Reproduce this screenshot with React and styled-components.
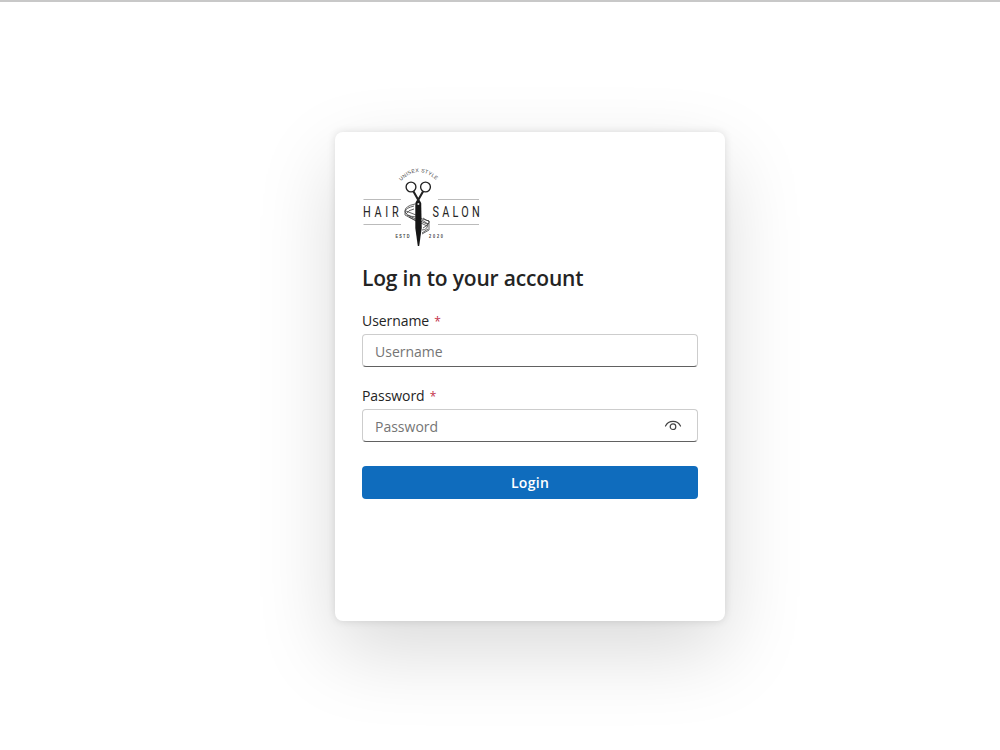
import React from "react";
import styled, { createGlobalStyle } from "styled-components";

const GlobalStyle = createGlobalStyle`
  * { box-sizing: border-box; }
  body {
    margin: 0;
    background: #fff;
    color: #242424;
    font-family: "Open Sans", "Noto Sans", sans-serif;
  }
`;

const Page = styled.main`
  height: 750px;
  display: flex;
  justify-content: center;
  align-items: flex-start;
  padding: 130px 0 0 60px;
  border-top: 2px solid #c8c8c8;
  overflow: hidden;
`;

const Card = styled.section`
  width: 390px;
  height: 489px;
  padding: 32px 27px 0;
  border-radius: 8px;
  background: #fff;
  box-shadow: 0 0 9px rgba(0, 0, 0, 0.12), 0 30px 80px rgba(0, 0, 0, 0.15);
`;

const Logo = styled.svg`
  display: block;
  width: 120px;
  height: 88px;
`;

const Title = styled.h1`
  margin: 11px 0 0;
  height: 31px;
  font-size: 21px;
  line-height: 30px;
  font-weight: 600;
  letter-spacing: -0.18px;
  white-space: nowrap;
`;

const Form = styled.form`
  display: flex;
  flex-direction: column;
  padding-top: 17px;
`;

const Field = styled.div`
  display: flex;
  flex-direction: column;
  height: 75px;
`;

const Label = styled.label`
  height: 23px;
  font-size: 14px;
  line-height: 20px;
  letter-spacing: -0.06px;
`;

const Required = styled.span`
  margin-left: 5px;
  font-size: 12px;
  color: #c4314b;
`;

const InputBox = styled.div`
  display: flex;
  align-items: center;
  height: 33px;
  padding: 0 15px 0 12px;
  border: 1px solid #cdcdcd;
  border-bottom-color: #616161;
  border-radius: 4px;
`;

const Input = styled.input`
  flex: 1;
  min-width: 0;
  height: 29px;
  padding: 1px 0 0;
  border: 0;
  outline: 0;
  background: transparent;
  font: 14px "Open Sans", "Noto Sans", sans-serif;
  &::placeholder { color: #757575; opacity: 1; }
`;

const Eye = styled.svg`
  width: 18px;
  height: 18px;
`;

const LoginButton = styled.button`
  height: 33px;
  margin-top: 5px;
  padding: 0;
  border: 0;
  border-radius: 4px;
  background: #0f6cbd;
  color: #fff;
  font: 600 14px/33px "Open Sans", "Noto Sans", sans-serif;
  letter-spacing: 0.3px;
`;

function SalonLogo() {
  return (
    <Logo viewBox="0 0 120 88" role="img" aria-label="Hair Salon">
      <defs>
        <path id="arc" d="M39 17 Q56.500 -1 75 17" />
      </defs>
      <text fontFamily="Liberation Sans, sans-serif" fontSize="5" fill="#333">
        <textPath href="#arc" textLength="40">UNISEX STYLE</textPath>
      </text>
      <g stroke="#aaa" strokeWidth="0.8">
        <path d="M1.500 35.500H39M76 35.500H117M1.500 60.500H39M76 60.500H117" />
      </g>
      <g fontFamily="Roboto, sans-serif" fontSize="15.500" fill="#252525">
        <text transform="translate(1 53) scale(0.7 1)" textLength="51">HAIR</text>
        <text transform="translate(70.500 53) scale(0.7 1)" textLength="67.500">SALON</text>
      </g>
      <g fontFamily="Liberation Sans, sans-serif" fontWeight="700" fontSize="5.500" fill="#444">
        <text transform="translate(33.500 74.200) scale(0.7 1)" textLength="20">ESTD</text>
        <text transform="translate(67 74.200) scale(0.7 1)" textLength="20">2020</text>
      </g>
      <g fill="none" stroke="#333" strokeWidth="0.75">
        <path d="M53 40Q43 42 43 47Q43 52 54 53L67 57Q68 60 61 64" />
        <path d="M52 42Q44 44 43 47M52 45Q46 46 44 50M45 51L65 60M44 47L54 51M47 53L65 62M61 54Q65 57 67 57M60 66Q66 66 66 59M60 69L66 65M60 56L66 60" />
        <path d="M43 47V51L54 57M67 57V66L60 70" />
      </g>
      <g fill="none" stroke="#222">
        <circle cx="49" cy="23" r="4.900" strokeWidth="1.350" />
        <circle cx="63.500" cy="23" r="4.900" strokeWidth="1.350" />
        <path d="M51.500 27.500L58 39M61 27.500L54.500 39" strokeWidth="2.100" />
      </g>
      <path d="M53.300 39Q56.300 35 59.200 39L59.700 64L57.200 82H55.800L53.300 64Z" fill="#161616" />
      <circle cx="56.400" cy="40" r="1" fill="#ddd" />
    </Logo>
  );
}

export default function App() {
  return (
    <>
      <GlobalStyle />
      <Page>
        <Card>
          <SalonLogo />
          <Title>Log in to your account</Title>
          <Form onSubmit={(event) => event.preventDefault()}>
            <Field>
              <Label htmlFor="username">Username<Required>*</Required></Label>
              <InputBox>
                <Input id="username" placeholder="Username" />
              </InputBox>
            </Field>
            <Field>
              <Label htmlFor="password">Password<Required>*</Required></Label>
              <InputBox>
                <Input id="password" type="password" placeholder="Password" />
                <Eye viewBox="0 0 18 18" fill="none" stroke="#424242" strokeWidth="1.200" strokeLinecap="round">
                  <path d="M1.500 9C4.500 2.800 13.500 2.800 16.500 9" />
                  <circle cx="9" cy="9.700" r="2.800" />
                </Eye>
              </InputBox>
            </Field>
            <LoginButton type="submit">Login</LoginButton>
          </Form>
        </Card>
      </Page>
    </>
  );
}
